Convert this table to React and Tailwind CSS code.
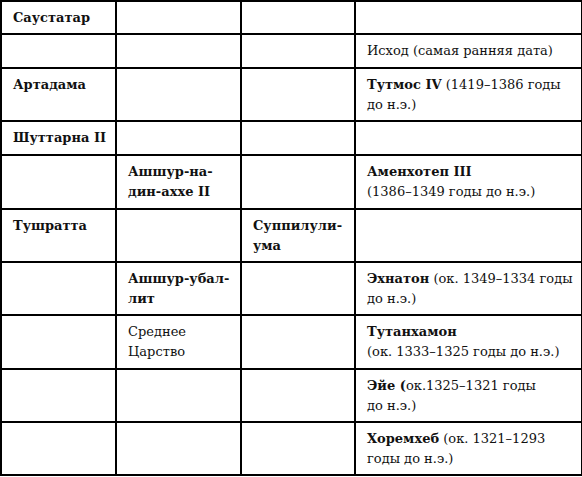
import React from "react";

const rows = [
  { h: "h-[33px]", c: [<b>Саустатар</b>, null, null, null] },
  { h: "h-[34px]", c: [null, null, null, <>Исход (самая ранняя дата)</>] },
  { h: "h-[53px]", c: [<b>Артадама</b>, null, null, <><b>Тутмос IV</b> (1419–1386 годы<br />до н.э.)</>] },
  { h: "h-[34px]", c: [<b>Шуттарна II</b>, null, null, null] },
  { h: "h-[54px]", c: [null, <b>Ашшур-на-<br />дин-ахxe II</b>, null, <><b>Аменхотеп III</b><br />(1386–1349 годы до н.э.)</>] },
  { h: "h-[53px]", c: [<b>Тушратта</b>, null, <b>Суппилули-<br />ума</b>, null] },
  { h: "h-[53px]", c: [null, <b>Ашшур-убал-<br />лит</b>, null, <><b>Эхнатон</b> (ок. 1349–1334 годы<br />до н.э.)</>] },
  { h: "h-[54px]", c: [null, <>Среднее<br />Царство</>, null, <><b>Тутанхамон</b><br />(ок. 1333–1325 годы до н.э.)</>] },
  { h: "h-[53px]", c: [null, null, null, <><b>Эйе (</b>ок.1325–1321 годы<br />до н.э.)</>] },
  { h: "h-[53px]", c: [null, null, null, <><b>Хоремхеб</b> (ок. 1321–1293<br />годы до н.э.)</>] },
];

export default function App() {
  return (
    <div className="w-[582px] h-[477px] bg-white">
      <table className="table-fixed border-collapse w-[581px] text-[13px] leading-[20px] text-[#111] font-['DejaVu_Serif',serif]">
        <colgroup>
          <col className="w-[115px]" />
          <col className="w-[125px]" />
          <col className="w-[114px]" />
          <col className="w-[227px]" />
        </colgroup>
        <tbody>
          {rows.map((r, i) => (
            <tr key={i} className={r.h}>
              {r.c.map((cell, j) => (
                <td
                  key={j}
                  className="border-2 border-black align-top pl-[11px] pr-1 pt-[6px] pb-0"
                >
                  {cell}
                </td>
              ))}
            </tr>
          ))}
        </tbody>
      </table>
    </div>
  );
}
